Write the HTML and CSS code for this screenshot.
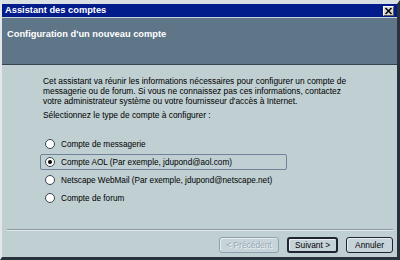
FILE: index.html
```html
<!DOCTYPE html>
<html lang="fr">
<head>
<meta charset="utf-8">
<title>Assistant des comptes</title>
<link rel="stylesheet" href="styles.css">
</head>
<body>
<div class="window">
  <div class="titlebar">
    <span class="title">Assistant des comptes</span>
    <span class="close"><svg width="9" height="8" viewBox="0 0 9 8"><path d="M1.5 1 L7.5 7 M7.5 1 L1.5 7" stroke="#000" stroke-width="1.5"/></svg></span>
  </div>
  <div class="header">Configuration d'un nouveau compte</div>
  <div class="content">
    <p class="intro">Cet assistant va réunir les informations nécessaires pour configurer un compte de messagerie ou de forum. Si vous ne connaissez pas ces informations, contactez votre administrateur système ou votre fournisseur d'accès à Internet.</p>
    <p class="prompt">Sélectionnez le type de compte à configurer :</p>
    <ul class="options">
      <li class="option"><span class="radio"></span>Compte de messagerie</li>
      <li class="option focused"><span class="radio checked"></span>Compte AOL (Par exemple, jdupond@aol.com)</li>
      <li class="option"><span class="radio"></span>Netscape WebMail (Par exemple, jdupond@netscape.net)</li>
      <li class="option"><span class="radio"></span>Compte de forum</li>
    </ul>
  </div>
  <div class="footer">
    <div class="separator"></div>
    <div class="buttons">
      <span class="btn disabled btn-prev">&lt; Précédent</span>
      <span class="btn default btn-next">Suivant &gt;</span>
      <span class="btn btn-cancel">Annuler</span>
    </div>
  </div>
</div>
</body>
</html>
```
FILE: styles.css
```css
html, body {
  margin: 0;
  padding: 0;
  background: #bfcfd2;
}
.window {
  width: 400px;
  height: 260px;
  box-sizing: border-box;
  background: #bfcfd2;
  border-top: 4px solid #d9dfe2;
  border-left: 2px solid #e2e7e9;
  border-right: 3px solid #29323c;
  border-bottom: 3px solid #29323c;
  display: flex;
  flex-direction: column;
  font-family: "Liberation Sans", Arial, sans-serif;
  color: #000;
}
.titlebar {
  height: 13px;
  background: #031c8c;
  display: flex;
  align-items: center;
  justify-content: space-between;
  padding: 0 3px 0 3px;
  border-bottom: 1px solid #c9d3da;
}
.title {
  color: #fff;
  font-weight: bold;
  font-size: 9.3px;
  line-height: 13px;
}
.close {
  width: 11px;
  height: 10px;
  box-sizing: border-box;
  background: #dcdad5;
  border: 1px solid;
  border-color: #fff #5a5a5a #5a5a5a #fff;
  display: flex;
  align-items: center;
  justify-content: center;
}
.header {
  height: 47px;
  box-sizing: border-box;
  background: #5f7689;
  color: #fff;
  font-weight: bold;
  font-size: 9.3px;
  line-height: 12px;
  padding: 10px 0 0 5px;
  border-bottom: 1px solid #36424d;
}
.content {
  flex: 1;
  padding: 11px 0 0 41px;
  font-size: 8.4px;
}
.intro {
  margin: 0;
  line-height: 10px;
  width: 312px;
}
.prompt {
  margin: 4px 0 0 0;
  line-height: 10px;
}
.options {
  list-style: none;
  margin: 16px 0 0 -3px;
  padding: 0;
  display: flex;
  flex-direction: column;
  gap: 2px;
  font-size: 8.2px;
}
.option {
  height: 16px;
  width: 247px;
  box-sizing: border-box;
  display: flex;
  align-items: center;
  gap: 6px;
  padding-left: 4px;
  border: 1px solid transparent;
  border-radius: 2px;
  white-space: nowrap;
}
.option.focused {
  border-color: #6f8299;
}
.radio {
  width: 10px;
  height: 10px;
  box-sizing: border-box;
  border-radius: 50%;
  background: #fff;
  border: 1px solid #3a4450;
  display: flex;
  align-items: center;
  justify-content: center;
  flex: none;
}
.radio.checked::after {
  content: "";
  width: 4px;
  height: 4px;
  border-radius: 50%;
  background: #000;
}
.footer {
  padding: 0 4px 4px 5px;
}
.separator {
  height: 0;
  border-top: 1px solid #8c9aa6;
  border-bottom: 1px solid #e6ecee;
}
.buttons {
  display: flex;
  justify-content: flex-end;
  gap: 8px;
  margin-top: 6px;
}
.btn {
  height: 16px;
  box-sizing: border-box;
  display: flex;
  align-items: center;
  justify-content: center;
  font-size: 8.4px;
  background: #c6d3d9;
  border: 1px solid #1e2530;
  border-radius: 3px;
  box-shadow: inset 1px 1px 0 #e8eef0;
}
.btn-prev { width: 60px; }
.btn-next { width: 51px; }
.btn-cancel { width: 47px; }
.btn.default {
  border-width: 2px;
}
.btn.disabled {
  border-color: #8ea0ae;
  color: #98a9b3;
  text-shadow: 1px 1px 0 #eef3f4;
}
```
